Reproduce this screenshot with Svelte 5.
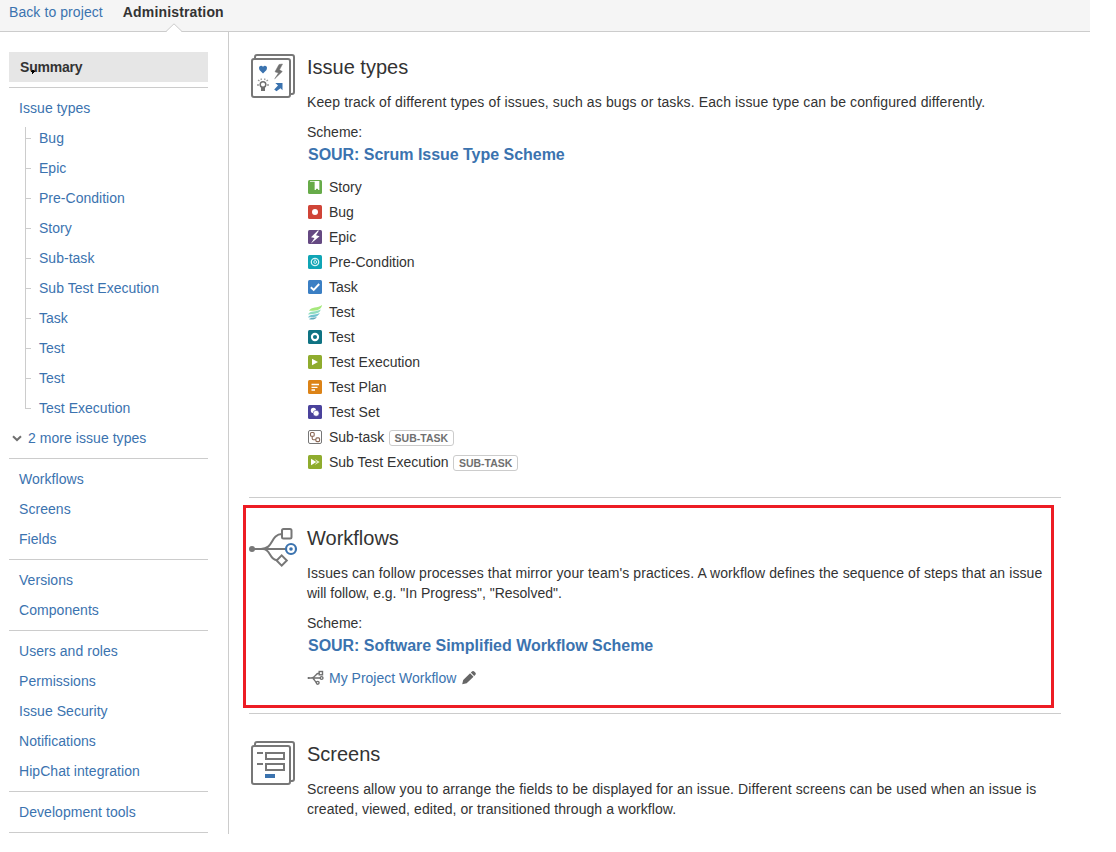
<script>
  const groups = [
    ['Workflows', 'Screens', 'Fields'],
    ['Versions', 'Components'],
    ['Users and roles', 'Permissions', 'Issue Security', 'Notifications', 'HipChat integration'],
    ['Development tools']
  ];
  const tree = ['Bug', 'Epic', 'Pre-Condition', 'Story', 'Sub-task', 'Sub Test Execution', 'Task', 'Test', 'Test', 'Test Execution'];
  const types = [
    ['Story', 'story'], ['Bug', 'bug'], ['Epic', 'epic'], ['Pre-Condition', 'pre'], ['Task', 'task'],
    ['Test', 'zephyr'], ['Test', 'test'], ['Test Execution', 'exec'], ['Test Plan', 'plan'],
    ['Test Set', 'set'], ['Sub-task', 'sub', true], ['Sub Test Execution', 'subexec', true]
  ];
  const fills = {
    story: '#67ab49', bug: '#d04437', epic: '#654982', pre: '#0fa5b5', task: '#3b7fc4',
    test: '#0f7383', exec: '#8fac2e', plan: '#dc8317', set: '#4a429c', subexec: '#8fac2e'
  };
</script>

<div class="page">
  <header>
    <a class="back" href="#top">Back to project</a>
    <span class="current">Administration
      <svg class="notch" width="18" height="10" viewBox="0 0 18 10"><path d="M0 10 L1 9 L9 1 L17 9 L18 10Z" fill="#fff"/><path d="M.5 8.5 H1 L9 .8 L17 8.5 H17.5" fill="none" stroke="#ccc"/></svg>
    </span>
  </header>

  <div class="columns">
    <nav>
      <div class="summary">Summary<svg class="pointer" width="4" height="4" viewBox="0 0 4 4"><path d="M0 1H1V0H3V1H4V2H3V3H2V4H1V2H0Z" fill="#000"/></svg></div>
      <div class="group">
        <a href="#types">Issue types</a>
        <ul>
          {#each tree as name}<li><a href="#type">{name}</a></li>{/each}
        </ul>
        <a class="more" href="#more"><svg width="10" height="7" viewBox="0 0 10 7"><path d="M1 1.2 L5 5 L9 1.2" fill="none" stroke="#707070" stroke-width="2"/></svg>2 more issue types</a>
      </div>
      {#each groups as group}
        <div class="group">
          {#each group as item}<a href="#item">{item}</a>{/each}
        </div>
      {/each}
      <div class="group"></div>
    </nav>

    <main>
      <section class="types">
        <svg class="big" width="48" height="48" viewBox="0 0 48 48">
          <g fill="none" stroke="#777" stroke-width="2">
            <path d="M6 6 V5 Q6 3 8 3 H43 Q45 3 45 5 V40 Q45 42 43 42 H42"/>
            <rect x="3" y="7" width="38" height="38" rx="2"/>
          </g>
          <path d="M14 21.5 L10.5 18 Q9 14.4 12 13.8 Q13.6 13.8 14 15 Q14.4 13.8 16 13.8 Q19 14.4 17.5 18Z" fill="#3b73af"/>
          <path d="M30 12.5 L26 19.8 L29.5 21 L25.7 26.8 L33.3 19.5 L30.5 17.8 L33.5 12Z" fill="#707070" stroke="#707070" stroke-width=".5"/>
          <circle cx="14" cy="32.5" r="2.8" fill="none" stroke="#707070" stroke-width="1.5"/>
          <path d="M12 35 h4 v4 h-4z" fill="#707070"/>
          <path d="M8 33h2M18 33h2M9 28l1.5 1M19 28l-1.5 1M12 26.5l.4 1.5M16 26.5l-.4 1.5" stroke="#999" stroke-width="1.3"/>
          <path d="M26.3 31 H33.5 V38.2 L31.5 36.2 L27.5 39.2 L25.2 37.5 L29 33.5Z" fill="#3b73af"/>
        </svg>
        <div class="body">
          <h2>Issue types</h2>
          <p class="loose">Keep track of different types of issues, such as bugs or tasks. Each issue type can be configured differently.</p>
          <div class="label">Scheme:</div>
          <a class="scheme" href="#scheme">SOUR: Scrum Issue Type Scheme</a>
          <ul class="typelist">
            {#each types as [name, kind, subtask]}
              <li>
                <svg width="16" height="16" viewBox="0 0 16 16">
                  {#if fills[kind]}<rect x="1" y="1" width="14" height="14" rx="1.5" fill={fills[kind]}/>{/if}
                  {#if kind === 'story'}
                    <path d="M3 2.5H12M8 2V11L10 9L12 11V2" fill="#fff" stroke="#fff" stroke-width=".7"/>
                  {:else if kind === 'bug'}
                    <circle cx="8" cy="8" r="3" fill="#fff"/>
                  {:else if kind === 'epic'}
                    <path d="M10.8 1.5L4 8.2L7.5 9L4 14.5L12.6 7.2L9 6.3L12 1.5Z" fill="#fff"/>
                  {:else if kind === 'pre'}
                    <circle cx="8" cy="8" r="3.7" fill="none" stroke="#d9f4f6" stroke-width="1.3"/><circle cx="8.2" cy="8" r="1.4" fill="none" stroke="#d9f4f6"/><path d="M8 4V6.5" fill="none" stroke="#d9f4f6" stroke-width=".8"/>
                  {:else if kind === 'task'}
                    <path d="M3.8 8.2L6.7 11L12.2 5" fill="none" stroke="#fff" stroke-width="1.9"/>
                  {:else if kind === 'zephyr'}
                    <path d="M2 6.8C4 2.5 11 4.5 15 1C14.5 5.8 10 7 2 6.8Z" fill="#a6e87c"/>
                    <path d="M1 10.4C3 6.4 9 8.2 13.8 5.5C12.8 9.4 8 10.2 1 10.4Z" fill="#8fdcc0"/>
                    <path d="M1 13.4C3 9.5 8 11.4 12.8 9C11 13 7 13.4 1 13.4Z" fill="#72c3cf"/>
                    <path d="M2 15.2C4 12.9 7 14 9.8 12.9C8.5 15.6 5 16 2 15.2Z" fill="#62aabb"/>
                  {:else if kind === 'test'}
                    <circle cx="8" cy="8" r="3.1" fill="none" stroke="#fff" stroke-width="2.1"/>
                  {:else if kind === 'exec'}
                    <path d="M5 4.8V11.2L11 8Z" fill="#fff"/>
                  {:else if kind === 'plan'}
                    <path d="M4.5 5.5H12M4.5 8.3H10.5M4.5 11H8" stroke="#fff" stroke-width="1.3"/>
                  {:else if kind === 'set'}
                    <circle cx="6.4" cy="6.4" r="2.6" fill="#fff"/><circle cx="9.1" cy="9.3" r="3" fill="#fff" stroke="#4a429c" stroke-width=".6"/>
                  {:else if kind === 'sub'}
                    <rect x="1.5" y="1.5" width="13" height="13" rx="1.5" fill="#fff" stroke="#777"/><g fill="none" stroke="#8b6855" stroke-width="1.1"><rect x="3.5" y="3.5" width="3.7" height="3.7" rx="1"/><rect x="8.9" y="8.9" width="3.7" height="3.7" rx="1"/><path d="M5.2 7V9.5Q5.2 10.7 6.4 10.7H9"/></g>
                  {:else}
                    <path d="M4 4.8V11.2L9.3 8Z" fill="#fff"/><path d="M7.6 5L12.8 8L7.6 11L9.9 8Z" fill="#e7edc9"/>
                  {/if}
                </svg>
                <span>{name}</span>{#if subtask}<b>SUB-TASK</b>{/if}
              </li>
            {/each}
          </ul>
        </div>
      </section>

      <section class="flows">
        <div class="outline"></div>
        <svg class="big" width="50" height="48" viewBox="0 0 50 48">
          <g fill="none" stroke="#777" stroke-width="2">
            <path d="M3 26H36M12 26C25 26 21 11.5 33 11M14 26C22 26 20 37 28 37"/>
            <rect x="33" y="6" width="9.5" height="9.5" rx="1.5"/>
            <path d="M32.7 32.4L37.8 37.5L32.7 42.6L27.6 37.5Z" fill="#fff"/>
          </g>
          <circle cx="3" cy="26" r="3" fill="#777"/>
          <circle cx="42" cy="26" r="5" fill="#fff" stroke="#3b73af" stroke-width="2.2"/><circle cx="42" cy="26" r="1.8" fill="#3b73af"/>
        </svg>
        <div class="body">
          <h2>Workflows</h2>
          <p><span class="medium">Issues can follow processes that mirror your team's practices. A workflow defines the sequence of steps that an issue</span><br>will follow, e.g. "In Progress", "Resolved".</p>
          <div class="label">Scheme:</div>
          <a class="scheme second" href="#scheme">SOUR: Software Simplified Workflow Scheme</a>
          <div class="flow">
            <svg width="18" height="16" viewBox="0 0 18 16"><g fill="none" stroke="#707070" stroke-width="1.4"><path d="M1 8H13M4 8C9 8 8 3.2 12 3.2M6 8.5C8 9.5 8 12.5 10 12.7"/><rect x="12.2" y="1.5" width="3.3" height="3.3"/><circle cx="14.6" cy="8" r="1.4" fill="#fff"/><circle cx="10.7" cy="12.8" r="1.4" fill="#fff"/></g><circle cx="1.6" cy="8" r="1.1" fill="#707070"/></svg>
            <a href="#flow">My Project Workflow</a>
            <svg class="pencil" width="16" height="16" viewBox="0 0 16 16"><path d="M1.2 14.3L2.2 10L9.1 3.3L12.5 6.7L5.7 13.3Z M9.8 2.6L11.3 1.3Q12.3 .6 13.2 1.4L14.5 2.7Q15.2 3.6 14.6 4.5L13.2 6Z" fill="#666"/></svg>
          </div>
        </div>
      </section>

      <section class="screens">
        <svg class="big" width="48" height="48" viewBox="0 0 48 48">
          <g fill="none" stroke="#777" stroke-width="2">
            <path d="M6 6 V5 Q6 3 8 3 H43 Q45 3 45 5 V40 Q45 42 43 42 H42"/>
            <rect x="3" y="7" width="38" height="38" rx="2"/>
            <path d="M8 14H14M8 25H14"/><rect x="17" y="14" width="18" height="6"/><rect x="17" y="25" width="18" height="6"/>
          </g>
          <path d="M16 35h10v4H16z" fill="#3b73af"/>
        </svg>
        <div class="body">
          <h2>Screens</h2>
          <p><span class="screenline">Screens allow you to arrange the fields to be displayed for an issue. Different screens can be used when an issue is</span><br><span class="tight">created, viewed, edited, or transitioned through a workflow.</span></p>
        </div>
      </section>
    </main>
  </div>
</div>

<style>
  :global(body) { background: #fff; }
  .page { width: 1090px; font: 14px/20px "Liberation Sans", Arial, sans-serif; color: #333; }
  a { color: #3b73af; text-decoration: none; }
  ul { list-style: none; margin: 0; padding: 0; }
  header { box-sizing: border-box; height: 32px; padding: 2px 0 0 9px; display: flex; gap: 20px; background: #f5f5f5; border-bottom: 1px solid #ccc; }
  .back { letter-spacing: .08px; }
  .current { position: relative; height: 20px; font-weight: bold; letter-spacing: .16px; white-space: nowrap; }
  .notch { position: absolute; left: 42px; top: 21px; }
  .columns { display: flex; }
  nav { box-sizing: border-box; width: 229px; height: 802px; padding: 20px 20px 0 9px; border-right: 1px solid #ccc; }
  .summary { position: relative; height: 30px; line-height: 30px; padding-left: 11px; margin-bottom: 5px; background: #e6e6e6; font-weight: bold; letter-spacing: -.2px; }
  .pointer { position: absolute; left: 22px; top: 18px; }
  .group { border-top: 1px solid #ccc; padding: 5px 0; }
  nav a { display: block; height: 30px; line-height: 30px; padding-left: 10px; letter-spacing: .05px; white-space: nowrap; }
  nav ul { margin-left: 16px; }
  nav li { position: relative; height: 30px; }
  nav li a { padding-left: 14px; letter-spacing: .02px; }
  nav li::before { content: ""; position: absolute; left: 0; top: 0; width: 1px; height: 30px; background: #ccc; }
  nav li:first-child::before { top: 4px; height: 26px; }
  nav li:last-child::before { height: 15px; }
  nav li::after { content: ""; position: absolute; left: 0; top: 15px; width: 6px; height: 1px; background: #ccc; }
  nav a.more { display: flex; align-items: center; gap: 6px; padding-left: 3px; }
  main { width: 812px; padding-left: 20px; }
  section { display: flex; position: relative; box-sizing: border-box; border-bottom: 1px solid #ccc; }
  .types { height: 466px; padding-top: 20px; }
  .flows { height: 216px; padding-top: 25px; }
  .screens { border: 0; padding-top: 25px; }
  .big { flex: none; width: 48px; }
  .big + .body { margin-left: 10px; }
  .flows .big { width: 50px; }
  .flows .body { margin-left: 8px; }
  .body { white-space: nowrap; }
  h2 { margin: 0; font-size: 20px; line-height: 30px; font-weight: normal; }
  p { margin: 10px 0; }
  .loose { letter-spacing: .118px; }
  .medium { letter-spacing: .09px; }
  .screenline { letter-spacing: .11px; }
  .tight { letter-spacing: .07px; }
  .label { height: 20px; }
  .scheme { display: block; height: 25px; line-height: 25px; font-size: 16px; font-weight: bold; padding-left: 1px; letter-spacing: -.03px; }
  .typelist { padding-top: 7px; }
  .typelist li { display: flex; align-items: center; height: 25px; }
  .typelist svg { margin-right: 6px; }
  b { box-sizing: border-box; width: 65px; height: 16px; margin: 2px 0 0 4.6px; border: 1px solid #ccc; border-radius: 3px; color: #707070; font-size: 10.5px; line-height: 15px; text-align: center; }
  .flow { display: flex; align-items: center; height: 25px; padding-top: 7px; }
  .flow a { margin: 0 5px 0 4px; }
  .outline { position: absolute; left: -6px; top: 7px; width: 805px; height: 197px; border: 3px solid #ed1c24; }
</style>
